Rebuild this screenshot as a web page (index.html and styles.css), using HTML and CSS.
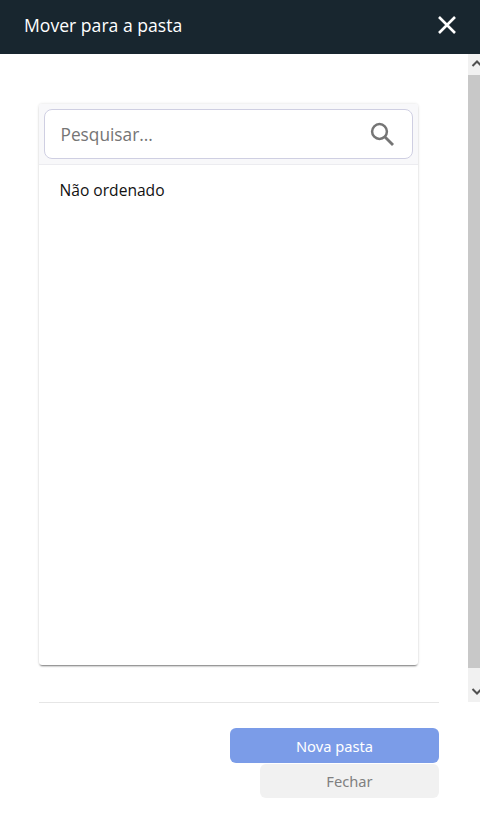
FILE: index.html
```html
<!DOCTYPE html>
<html lang="pt">
<head>
<meta charset="utf-8">
<title>Mover para a pasta</title>
<link rel="stylesheet" href="styles.css">
</head>
<body>
<div class="dialog">
  <header class="topbar">
    <h1 class="topbar-title">Mover para a pasta</h1>
    <button class="close" aria-label="Fechar">
      <svg width="20" height="20" viewBox="0 0 20 20"><path d="M2 2 L18 18 M18 2 L2 18" stroke="#fff" stroke-width="2.6" fill="none"/></svg>
    </button>
  </header>
  <div class="scroll-region">
    <main class="content">
      <section class="card">
        <div class="search-head">
          <div class="search-box">
            <span class="placeholder">Pesquisar...</span>
            <svg class="search-icon" width="26" height="26" viewBox="0 0 26 26"><circle cx="10.5" cy="10.5" r="7.4" stroke="#757575" stroke-width="2.5" fill="none"/><path d="M16 16 L24 24" stroke="#757575" stroke-width="2.8" fill="none"/></svg>
          </div>
        </div>
        <div class="list">
          <div class="list-item">Não ordenado</div>
        </div>
      </section>
    </main>
    <div class="scrollbar">
      <div class="scroll-btn scroll-btn-top"><svg width="12" height="21" viewBox="0 0 12 21"><path d="M4.5 12 L9 7.5 L13.5 12" stroke="#505050" stroke-width="2" fill="none"/></svg></div>
      <div class="thumb"></div>
      <div class="scroll-btn scroll-btn-bottom"><svg width="12" height="34" viewBox="0 0 12 34"><path d="M4.5 21 L9 25.5 L13.5 21" stroke="#505050" stroke-width="2" fill="none"/></svg></div>
    </div>
  </div>
  <footer class="footer">
    <button class="btn btn-primary">Nova pasta</button>
    <button class="btn btn-secondary">Fechar</button>
  </footer>
</div>
</body>
</html>
```
FILE: styles.css
```css
* { box-sizing: border-box; }
html, body { margin: 0; height: 100%; background: #fff; overflow: hidden; }
body { font-family: "Open Sans", "Noto Sans", sans-serif; color: #111; }
.dialog { display: flex; flex-direction: column; height: 820px; width: 480px; }
.topbar { height: 54px; flex: none; background: #18262f; display: flex; align-items: center; justify-content: space-between; padding: 0 23px 0 24px; }
.topbar-title { margin: 0; font-size: 17.6px; font-weight: 400; color: #fff; line-height: 22px; position: relative; top: -2px; }
.close { background: none; border: 0; padding: 0; width: 20px; height: 20px; display: block; margin-top: -4px; }
.close svg { display: block; }
.scroll-region { height: 648px; flex: none; display: flex; }
.content { width: 468px; padding: 50px 50px 0 39px; }
.card { height: 561px; background: #fff; border-radius: 3px; box-shadow: 0 2px 2px -1px rgba(0,0,0,.5), 0 0 3px rgba(0,0,0,.14); display: flex; flex-direction: column; overflow: hidden; }
.search-head { height: 61px; flex: none; padding: 5px; background: #f8f8fa; border-bottom: 1px solid #ececf0; }
.search-box { height: 50px; background: #fff; border: 1px solid #cfcfe2; border-radius: 8px; display: flex; align-items: center; justify-content: space-between; padding: 0 17px 0 15.5px; }
.placeholder { font-size: 17.3px; color: #757575; }
.search-icon { display: block; }
.list { flex: 1; }
.list-item { padding: 14px 20.5px; font-size: 15.6px; line-height: 22px; color: #111; }
.scrollbar { width: 12px; flex: none; display: flex; flex-direction: column; background: #f1f1f1; overflow: hidden; }
.scroll-btn { flex: none; overflow: hidden; }
.scroll-btn svg { display: block; }
.scroll-btn-top { height: 21px; }
.scroll-btn-bottom { height: 34px; }
.thumb { flex: 1; background: #c8c8c8; }
.footer { display: flex; flex-direction: column; align-items: flex-end; gap: 1px; padding: 26px 41px 0 0; position: relative; }
.footer::before { content: ""; position: absolute; left: 39px; right: 41px; top: 0; height: 1px; background: #e6e6e6; }
.btn { border: 0; border-radius: 6px; font-family: "Noto Sans", "Open Sans", sans-serif; font-size: 14.7px; padding: 0; display: block; }
.btn-primary { width: 209px; height: 35px; background: #7b9ce8; color: #fff; }
.btn-secondary { width: 179px; height: 34px; background: #f1f1f1; color: #808080; }
```
